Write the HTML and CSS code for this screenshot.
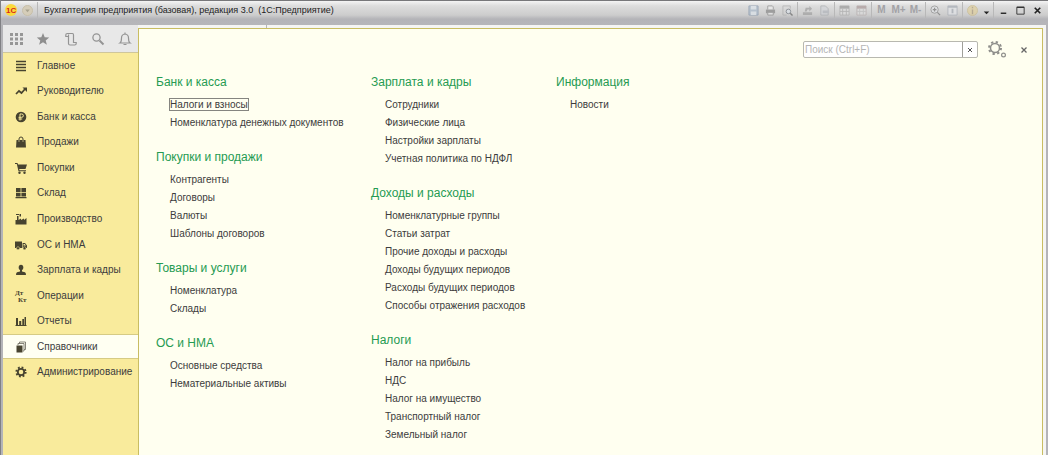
FILE: index.html
```
<!DOCTYPE html>
<html lang="ru">
<head>
<meta charset="utf-8">
<title>Бухгалтерия предприятия (базовая), редакция 3.0 (1С:Предприятие)</title>
<link rel="stylesheet" href="styles.css">
</head>
<body>
<div class="window">
  <header class="titlebar">
    <svg class="logo" viewBox="0 0 12 12"><circle cx="6" cy="6" r="6" fill="#fbd93b"/><text class="logo-text" x="1" y="9">1С</text></svg>
    <button class="tool history" aria-label="История"><svg viewBox="0 0 12 12"><circle cx="6" cy="6" r="5.500" fill="#d5cdb9" stroke="#c6bda6"/><path d="M3.500 5h5L6 8z" fill="#a9a390"/></svg></button>
    <i class="split"></i>
    <h1 class="title">Бухгалтерия предприятия (базовая), редакция 3.0&nbsp; (1С:Предприятие)</h1>
    <div class="tools">
      <button class="tool faded" aria-label="Сохранить"><svg viewBox="0 0 12 12"><path d="M1 1h10v10H1z" fill="#a9b8c9" stroke="#8798ad"/><path d="M3 1h6v4H3zM3 7h6v4H3z" fill="#dce3ea"/></svg></button>
      <button class="tool faded" aria-label="Печать"><svg viewBox="0 0 12 12"><path d="M3 5V1h5l1 1v3" fill="#eee" stroke="#888"/><path d="M1 5h10v4H1z" fill="#888"/><path d="M3 8h6v3H3z" fill="#e8e8e8" stroke="#888"/></svg></button>
      <button class="tool faded" aria-label="Просмотр"><svg viewBox="0 0 12 12"><path d="M9 4V1H1v10h4" fill="none" stroke="#aaa"/><circle cx="7" cy="7" r="2.500" fill="#dce2e8" stroke="#6b727b"/><path d="m9 9 2.500 2.500" stroke="#666" stroke-width="1.500"/></svg></button>
      <i class="split"></i>
      <button class="tool faded" aria-label="Получить ссылку"><svg viewBox="0 0 12 12"><path d="M1 8h10v3H1zM3 7l1-4h4V1l3 3-3 3V5H6L5 7z" fill="#a0a0a0"/></svg></button>
      <button class="tool faded" aria-label="Перейти по ссылке"><svg viewBox="0 0 12 12"><path d="M2 1h5l3 3v7H2z" fill="#d2d4d8" stroke="#a5a8ad"/><path d="M4 6h7v3H4z" fill="#b1b5bb"/></svg></button>
      <i class="split"></i>
      <button class="tool faded" aria-label="Калькулятор"><svg viewBox="0 0 12 12"><path d="M1 1h10v10H1z" fill="#ddd" stroke="#aaa"/><path d="M1 1h10v3H1z" fill="#999"/><path d="M1 7h10M4 4v7M8 4v7" stroke="#aaa"/></svg></button>
      <button class="tool faded" aria-label="Календарь"><svg viewBox="0 0 12 12"><path d="M1 1h10v10H1z" fill="#ddd" stroke="#b5aaaa"/><path d="M1 1h10v3H1z" fill="#aa9898"/><path d="M1 7h10M4 4v7M8 4v7" stroke="#bbb"/></svg></button>
      <i class="split"></i>
      <button class="tool memory">M</button>
      <button class="tool memory">M+</button>
      <button class="tool memory">M-</button>
      <i class="split"></i>
      <button class="tool faded" aria-label="Масштаб"><svg viewBox="0 0 12 12"><circle cx="5" cy="5" r="4" fill="#e2e4e7" stroke="#888"/><path d="M3 5h4M5 3v4M8 8l3 3" stroke="#777" stroke-width="1.300"/></svg></button>
      <button class="tool faded" aria-label="Окна"><svg viewBox="0 0 12 12"><path d="M1 1h10v10H1z" fill="#e2e4e7" stroke="#a4aab3"/><path d="M1 2h10M6 4v5" stroke="#a4aab3" stroke-width="2"/></svg></button>
      <i class="split"></i>
      <button class="tool faded" aria-label="Информация"><svg viewBox="0 0 12 12"><circle cx="6" cy="6" r="5.500" fill="#e0cf9c" stroke="#cbbb8b"/><path d="M6 2v1.500M6 5v5" stroke="#a8987a" stroke-width="1.500"/></svg></button>
      <button class="tool narrow" aria-label="Ещё"><svg viewBox="0 0 12 12"><path d="M3 7h6l-3 3z" fill="#222"/></svg></button>
      <i class="split"></i>
      <button class="tool" aria-label="Свернуть"><svg viewBox="0 0 12 12"><path d="M3 9h6" stroke="#222" stroke-width="1.500"/></svg></button>
      <button class="tool" aria-label="Развернуть"><svg viewBox="0 0 12 12"><path d="M2 2.500h8V10H2z" fill="none" stroke="#333"/><path d="M2 2.500h8" stroke="#333" stroke-width="1.500"/></svg></button>
      <button class="tool" aria-label="Закрыть"><svg viewBox="0 0 12 12"><path d="m3 3 6 6M9 3 3 9" stroke="#222" stroke-width="1.800"/></svg></button>
    </div>
  </header>
  <div class="workspace">
    <aside class="sidebar">
      <div class="quick">
        <button class="quick-button" aria-label="Меню функций"><svg viewBox="0 0 14 14"><path d="M1 1h3v3H1zm5 0h3v3H6zm5 0h3v3h-3zM1 5.500h3v3H1zm5 0h3v3H6zm5 0h3v3h-3zM1 10h3v3H1zm5 0h3v3H6zm5 0h3v3h-3z" fill="#969696"/></svg></button>
        <button class="quick-button" aria-label="Избранное"><svg viewBox="0 0 14 14"><path d="m7 1 1.700 4.200 4.500.3-3.500 2.900 1.200 4.400L7 10.300l-3.900 2.500 1.200-4.400L.8 5.500l4.500-.3z" fill="#8e8e8e"/></svg></button>
        <button class="quick-button" aria-label="История"><svg viewBox="0 0 14 14"><path d="M4.500 4.500H1.800V3q0-1.500 1.500-1.500h5.200q1 0 1 1.500v7.500h2.700v1q0 1.500-1.500 1.500H6q-1.500 0-1.500-1.500v-9" fill="none" stroke="#949494" stroke-width="1.200"/></svg></button>
        <button class="quick-button" aria-label="Поиск"><svg viewBox="0 0 14 14"><circle cx="5.500" cy="5.500" r="3.600" fill="none" stroke="#949494" stroke-width="1.300"/><path d="m8.500 8.500 4 4" stroke="#949494" stroke-width="2"/></svg></button>
        <button class="quick-button" aria-label="Уведомления"><svg viewBox="0 0 14 14"><path d="M2 11q1.500-1 1.500-5 0-3.500 3.500-4 3.500.5 3.500 4 0 4 1.500 5zM7 2V.5M5.500 12.500h3" fill="none" stroke="#949494" stroke-width="1.200"/></svg></button>
      </div>
      <nav class="sections">
        <a class="section" href="#"><svg viewBox="0 0 12 12"><path d="M1 1.500h10M1 4.500h10M1 7.500h10M1 10.500h10" stroke="#47432f" stroke-width="1.400"/></svg>Главное</a>
        <a class="section" href="#"><svg viewBox="0 0 12 12"><path d="m1 9 3-3 2.500 2L10 4" fill="none" stroke="#47432f" stroke-width="1.700"/><path d="M7.500 2.500H12V7z" fill="#47432f"/></svg>Руководителю</a>
        <a class="section" href="#"><svg viewBox="0 0 12 12"><circle cx="6" cy="6" r="5.300" fill="#47432f"/><path d="M5 9.500V3h1.700a1.600 1.600 0 0 1 0 3.300H3.500M3.500 8h3.700" fill="none" stroke="#f9eb9c"/></svg>Банк и касса</a>
        <a class="section" href="#"><svg viewBox="0 0 12 12"><path d="M1.500 4h9l.5 7.500H1z" fill="#47432f"/><path d="M4 6V3q0-2 2-2t2 2v3" fill="none" stroke="#47432f"/><path d="M4 4v2M8 4v2" stroke="#aca476"/></svg>Продажи</a>
        <a class="section" href="#"><svg viewBox="0 0 12 12"><path d="M0 1h2.500l.5 1.500h9L10.500 7H4.200l.3 1.200H11v1H3.500L1.800 2H0z" fill="#47432f"/><circle cx="4.500" cy="10.700" r="1.200" fill="#47432f"/><circle cx="9.500" cy="10.700" r="1.200" fill="#47432f"/></svg>Покупки</a>
        <a class="section" href="#"><svg viewBox="0 0 12 12"><path d="M1 1h4.600v4H1zm5.400 0H11v4H6.400zM1 5.800h4.600v3.700H1zm5.400 0H11v3.700H6.400zM.5 10h11v1.200H.5z" fill="#47432f"/></svg>Склад</a>
        <a class="section" href="#"><svg viewBox="0 0 12 12"><path d="M.5 11.500V7H2V3h1.500v4L6 5.500V7l3-1.500V7l2.500-2v6.500zM1 1h3v1H1zm3.500 0H6v2.500H4.500z" fill="#47432f"/></svg>Производство</a>
        <a class="section" href="#"><svg viewBox="0 0 12 12"><path d="M0 2.500h7V9H0zM7.600 4H10l2 2.500V9H7.600z" fill="#47432f"/><path d="M8.500 5h1.200L11 6.500H8.500z" fill="#f9eb9c"/><circle cx="3" cy="9.200" r="1.500" fill="#47432f" stroke="#f9eb9c" stroke-width=".5"/><circle cx="9.500" cy="9.200" r="1.500" fill="#47432f" stroke="#f9eb9c" stroke-width=".5"/></svg>ОС и НМА</a>
        <a class="section" href="#"><svg viewBox="0 0 12 12"><ellipse cx="6" cy="3.500" rx="2.300" ry="2.800" fill="#47432f"/><path d="M5 6h2v1.500l3 .8q1 .5 1 2.700H1q0-2.200 1-2.700l3-.8z" fill="#47432f"/></svg>Зарплата и кадры</a>
        <a class="section" href="#"><svg viewBox="0 0 12 12"><text class="debit" x="0" y="5">Дт</text><text class="debit" x="3" y="12">Кт</text></svg>Операции</a>
        <a class="section" href="#"><svg viewBox="0 0 12 12"><path d="M1 3h2v7H1zm3.200 3h2v4h-2zm3.100-2h1.700v6H7.300zM9.500 2H11v8H9.500zM.5 10h11v1H.5z" fill="#47432f"/></svg>Отчеты</a>
        <a class="section current" href="#" aria-current="page"><svg viewBox="0 0 12 12"><path d="M1.500 4.500h6v7h-6z" fill="#47432f"/><path d="M3 4V2.500h6V10H8M4.500 2.500V1h6v7.500H9" fill="none" stroke="#6a675c" stroke-width=".8"/></svg>Справочники</a>
        <a class="section" href="#"><svg viewBox="0 0 12 12"><circle cx="6" cy="6" r="4.600" fill="none" stroke="#47432f" stroke-width="2" stroke-dasharray="1.800 1.810"/><circle cx="6" cy="6" r="3.200" fill="none" stroke="#47432f" stroke-width="1.800"/></svg>Администрирование</a>
      </nav>
    </aside>
    <div class="content">
      <div class="tabs"><div class="tab"></div></div>
      <main class="panel">
        <div class="panel-tools">
          <div class="search">
            <input class="search-input" type="text" placeholder="Поиск (Ctrl+F)" aria-label="Поиск">
            <button class="search-clear" aria-label="Очистить"><svg viewBox="0 0 6 6"><path d="m1 1 4 4M5 1 1 5" stroke="#555"/></svg></button>
          </div>
          <button class="settings" aria-label="Настройка"><svg viewBox="0 0 20 18"><circle cx="8" cy="7" r="6" fill="none" stroke="#8f8f8b" stroke-width="2" stroke-dasharray="2.300 2.412"/><circle cx="8" cy="7" r="4.500" fill="none" stroke="#8f8f8b" stroke-width="1.500"/><circle cx="16.500" cy="14" r="1.900" fill="none" stroke="#8f8f8b" stroke-width="1.200"/></svg></button>
          <button class="close" aria-label="Закрыть"><svg viewBox="0 0 8 8"><path d="m1.500 1.500 5 5M6.500 1.500l-5 5" stroke="#666" stroke-width="1.300"/></svg></button>
        </div>
        <div class="columns">
          <div class="column">
            <section><h2>Банк и касса</h2><ul><li><a class="focused" href="#">Налоги и взносы</a></li><li><a href="#">Номенклатура денежных документов</a></li></ul></section>
            <section><h2>Покупки и продажи</h2><ul><li><a href="#">Контрагенты</a></li><li><a href="#">Договоры</a></li><li><a href="#">Валюты</a></li><li><a href="#">Шаблоны договоров</a></li></ul></section>
            <section><h2>Товары и услуги</h2><ul><li><a href="#">Номенклатура</a></li><li><a href="#">Склады</a></li></ul></section>
            <section><h2>ОС и НМА</h2><ul><li><a href="#">Основные средства</a></li><li><a href="#">Нематериальные активы</a></li></ul></section>
          </div>
          <div class="column">
            <section><h2>Зарплата и кадры</h2><ul><li><a href="#">Сотрудники</a></li><li><a href="#">Физические лица</a></li><li><a href="#">Настройки зарплаты</a></li><li><a href="#">Учетная политика по НДФЛ</a></li></ul></section>
            <section><h2>Доходы и расходы</h2><ul><li><a href="#">Номенклатурные группы</a></li><li><a href="#">Статьи затрат</a></li><li><a href="#">Прочие доходы и расходы</a></li><li><a href="#">Доходы будущих периодов</a></li><li><a href="#">Расходы будущих периодов</a></li><li><a href="#">Способы отражения расходов</a></li></ul></section>
            <section><h2>Налоги</h2><ul><li><a href="#">Налог на прибыль</a></li><li><a href="#">НДС</a></li><li><a href="#">Налог на имущество</a></li><li><a href="#">Транспортный налог</a></li><li><a href="#">Земельный налог</a></li></ul></section>
          </div>
          <div class="column">
            <section><h2>Информация</h2><ul><li><a href="#">Новости</a></li></ul></section>
          </div>
        </div>
      </main>
    </div>
  </div>
</div>
</body>
</html>
```
FILE: styles.css
```
* { box-sizing: border-box; }

body {
  margin: 0;
  font: 10px/18px "Liberation Sans", Arial, sans-serif;
  color: #3c3c3c;
}

a { color: inherit; text-decoration: none; }

button {
  display: flex;
  align-items: center;
  justify-content: center;
  padding: 0;
  border: 0;
  background: none;
  font: inherit;
  color: inherit;
}

h1, h2, ul { margin: 0; padding: 0; font-weight: normal; list-style: none; }

.window {
  display: flex;
  flex-direction: column;
  min-height: 100vh;
  background: #b4b4b8;
  border-left: 1px solid #808084;
}

.titlebar {
  display: flex;
  align-items: center;
  height: 25px;
  padding: 0 2px 6px 4px;
  border-top: 1px solid #77777a;
  background: linear-gradient(#f4f4f4 0, #dcdcdc 5px, #cdcdcd 14px, #b4b4b8 18px, #b6b6ba 100%);
}

.logo { width: 12px; height: 12px; }
.logo-text { font: bold 8px "Liberation Sans", sans-serif; fill: #d8281c; }
.history { margin-left: 2px; }
.title {
  margin-left: 5px;
  font-family: "Liberation Sans Narrow", "Liberation Sans", sans-serif;
  font-size: 9px;
  color: #222;
  white-space: nowrap;
}

.tools { display: flex; align-items: center; margin-left: auto; }
.tool { width: 17px; height: 16px; }
.tool svg { width: 11px; height: 11px; }
.tool.narrow { width: 11px; }
.faded { opacity: .7; }
.memory { font-weight: bold; color: #a2a2a6; }
.split { width: 1px; height: 16px; margin: 0 1px; background: #b8b8b8; }

.workspace {
  display: flex;
  flex: 1;
  margin: 0 2px;
  padding-right: 3px;
  background: #f5f5f3;
}

.sidebar {
  flex: none;
  width: 135px;
  background: #f9eb9c;
}

.quick {
  display: flex;
  align-items: center;
  justify-content: space-between;
  height: 28px;
  padding: 0 6px;
  background: #e8e8e8;
  border-bottom: 1px solid #cfc69b;
}

.quick-button svg { width: 14px; height: 14px; }

.sections {
  display: grid;
  grid-auto-rows: 1fr;
  min-height: 332px;
}

.section {
  display: flex;
  align-items: center;
  gap: 10px;
  padding-left: 12px;
  border: solid transparent;
  border-width: 1px 0;
}

.section svg { width: 12px; height: 12px; overflow: visible; }
.section.current { background: #fffff2; border-color: #d6cb84; }
.debit { font: bold 7px "Liberation Serif", serif; fill: #47432f; }

.content { display: flex; flex: 1; flex-direction: column; }
.tabs { height: 3px; }
.tab { width: 129px; height: 3px; border-right: 1px solid #b5b5b5; }

.panel {
  flex: 1;
  padding: 12px 12px 0 17px;
  background: #fffff0;
  border: solid #c9bd62;
  border-width: 1px 1px 0 1px;
}

.panel-tools {
  display: flex;
  align-items: center;
  justify-content: flex-end;
  height: 17px;
}

.search {
  display: flex;
  width: 175px;
  height: 17px;
  border: 1px solid #b8b8b0;
  border-radius: 2px;
  background: #fff;
}

.search-input {
  flex: 1;
  min-width: 0;
  padding: 0 1px;
  border: 0;
  background: none;
  font: inherit;
}

.search-input::placeholder { color: #b5b5b5; opacity: 1; }
.search-clear { width: 15px; border-left: 1px solid #a0a09a; }
.search-clear svg { width: 6px; height: 6px; }
.settings { margin-left: 9px; }
.settings svg { width: 20px; height: 18px; }
.close { width: 12px; margin-left: 11px; }
.close svg { width: 8px; height: 8px; }

.columns {
  display: grid;
  grid-template-columns: 215px 185px 1fr;
  padding-top: 15px;
}

.column section { margin-bottom: 16px; }
.column h2 { height: 23px; font-size: 12px; line-height: 18px; color: #259b52; }
.column ul { padding-left: 14px; }
.column li { height: 18px; white-space: nowrap; }
.focused { outline: 1px solid #858580; }
```
